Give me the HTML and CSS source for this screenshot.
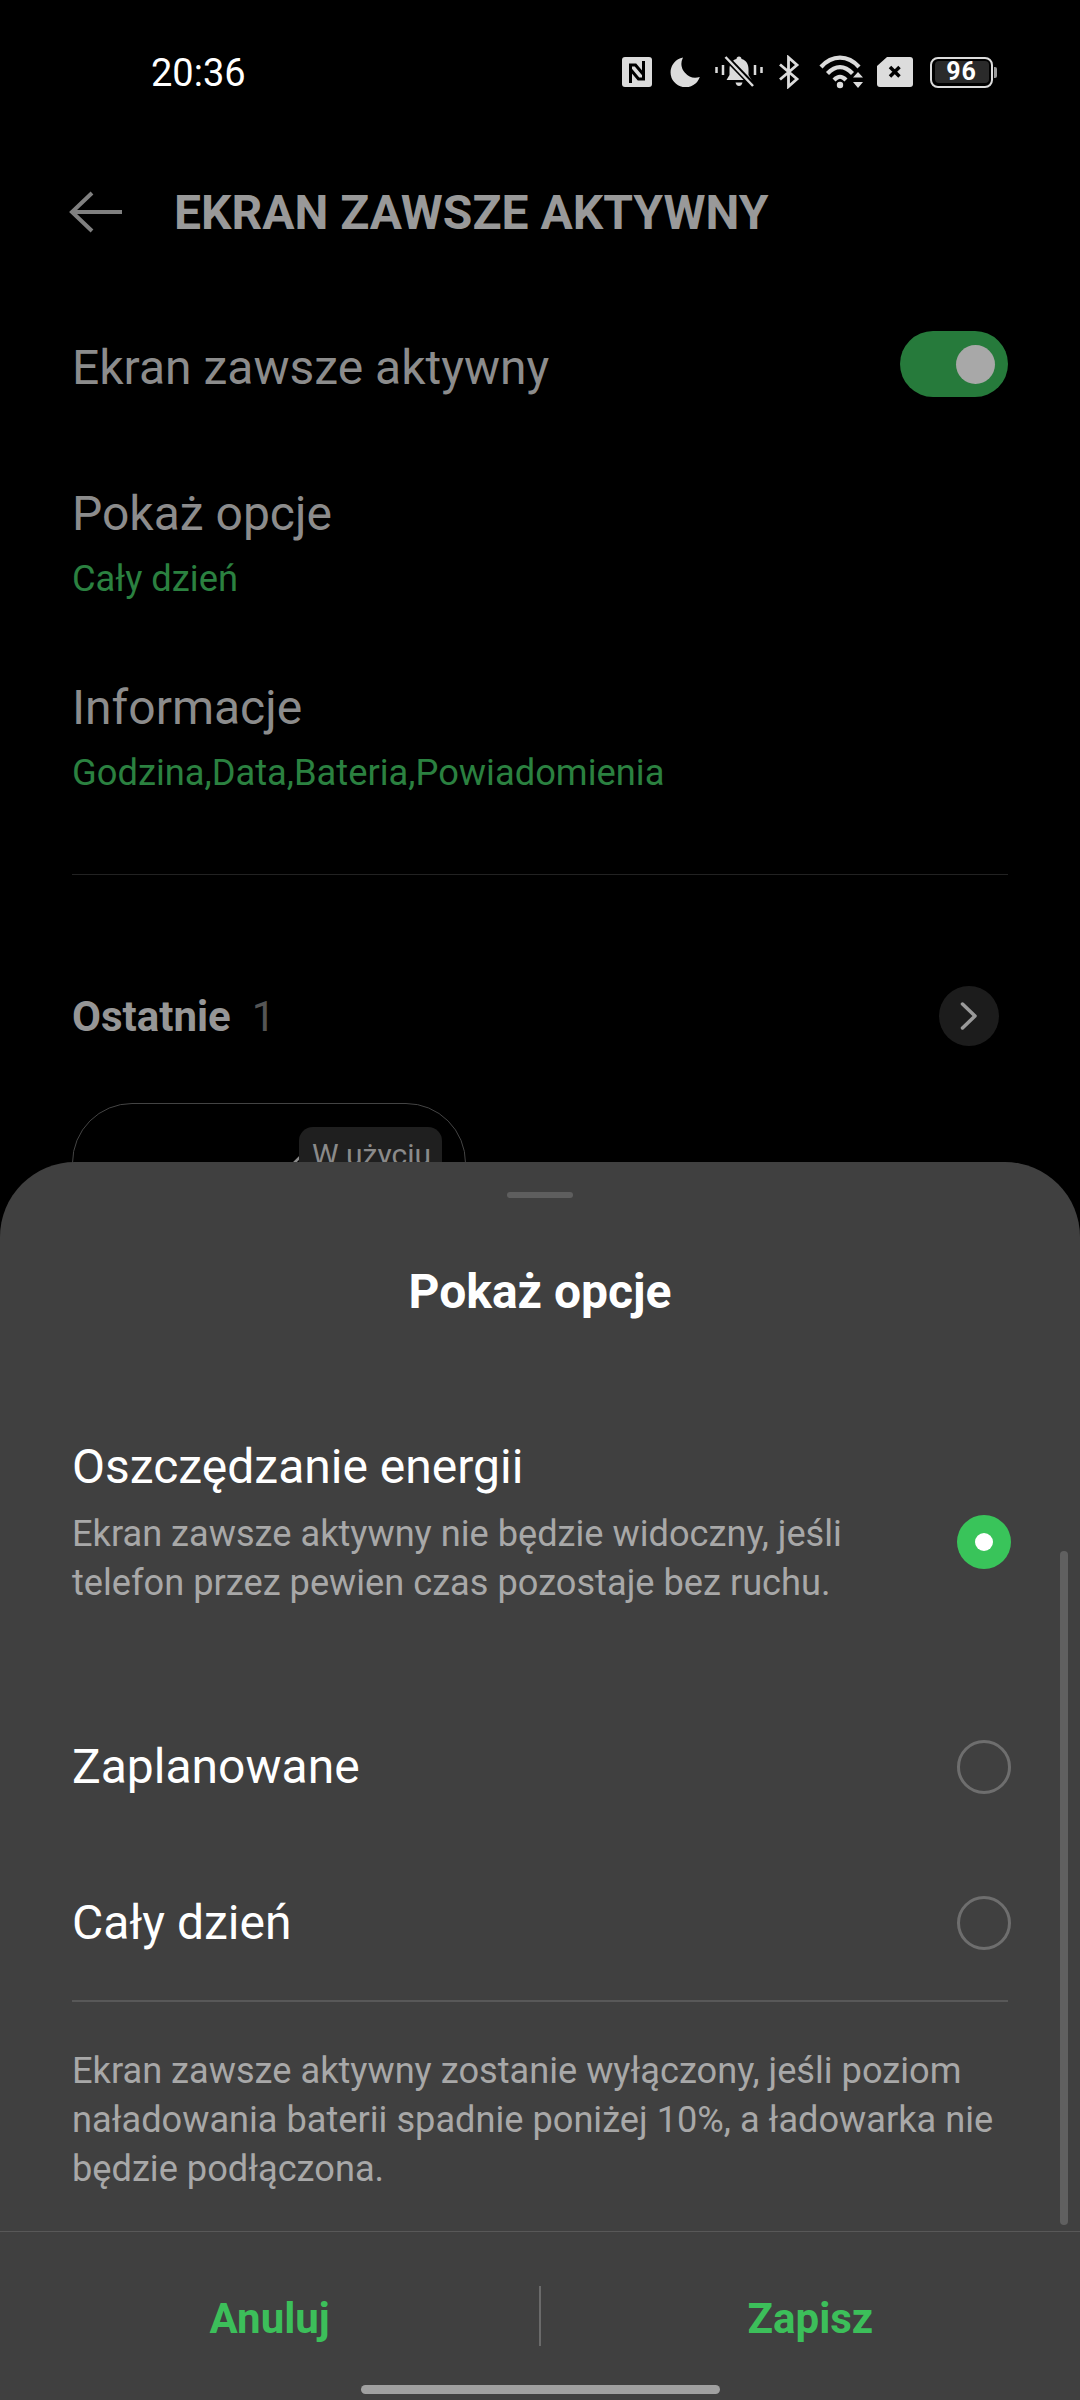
FILE: index.html
```html
<!DOCTYPE html>
<html lang="pl">
<head>
    <meta charset="UTF-8">
    <meta name="viewport" content="width=device-width, initial-scale=1.0">
    <title>Ekran zawsze aktywny</title>
    <link rel="stylesheet" href="styles.css">
</head>
<body>
    <div class="screen">
        <div class="status-bar">
            <span class="clock">20:36</span>
            <div class="status-icons">
                <svg class="ic-nfc" width="30" height="30" viewBox="0 0 30 30"><rect width="30" height="30" rx="3" fill="#dcdcdc"/><path d="M8.500 26V8h5l7.500 9M21.500 4v18h-5L9 13" fill="none" stroke="#000" stroke-width="3"/></svg>
                <svg class="ic-moon" width="30" height="30" viewBox="0 0 30 30"><path d="M13 0.500A15 15 0 1 0 29.800 20 14 14 0 0 1 13 0.500Z" fill="#dcdcdc"/></svg>
                <svg class="ic-bell" width="48" height="34" viewBox="0 0 48 34"><path d="M24 1.500c1.500 0 2.500 1 2.500 2.500 5 1.200 7 5.500 7 10v6l3 5H11.500l3-5v-6c0-4.500 2-8.800 7-10 0-1.500 1-2.500 2.500-2.500ZM20.500 27.500h7c-.5 2.500-2 3.500-3.500 3.500s-3-1-3.500-3.500Z" fill="#dcdcdc"/><path d="M12 3.500 39 31.500" stroke="#000" stroke-width="6"/><path d="M10.500 2 38 31" stroke="#dcdcdc" stroke-width="2.500"/><path d="M1.500 12v6M8 10v10M40 10v10M46.500 12v6" stroke="#dcdcdc" stroke-width="2.500"/></svg>
                <svg class="ic-bt" width="22" height="34" viewBox="0 0 22 34"><path d="M2 9.500 19 24 10.500 31.500V2.500L19 10 2 24.500" fill="none" stroke="#dcdcdc" stroke-width="2.800"/></svg>
                <svg class="ic-wifi" width="45" height="34" viewBox="0 0 45 34"><path d="M2 12C13-.5 29-.5 40 12M8.500 18.500c8-8.500 17-8.500 25 0M15 25c4.500-4.500 7.500-4.500 12 0" fill="none" stroke="#dcdcdc" stroke-width="4.200"/><circle cx="21" cy="30" r="3.200" fill="#dcdcdc"/><path d="M34 22.500 39 17l5 5.500ZM34 27 39 33l5-6Z" fill="#dcdcdc"/></svg>
                <svg class="ic-sim" width="36" height="30" viewBox="0 0 36 30"><path d="M10 0h23a3 3 0 0 1 3 3v24a3 3 0 0 1-3 3H3a3 3 0 0 1-3-3V9Z" fill="#dcdcdc"/><path d="M13 10l9.500 9.500M22.500 10 13 19.500" stroke="#000" stroke-width="3.500"/></svg>
                <div class="battery"><div class="battery-body"><span class="battery-level">96</span></div><div class="battery-nub"></div></div>
            </div>
        </div>

        <div class="top-bar">
            <svg class="back" width="54" height="44" viewBox="0 0 54 44"><path d="M53 22H3M23 3 3 22l20 19" fill="none" stroke="#808080" stroke-width="4"/></svg>
            <h1 class="page-title">EKRAN ZAWSZE AKTYWNY</h1>
        </div>

        <div class="settings">
            <div class="setting-row">
                <span class="setting-name">Ekran zawsze aktywny</span>
                <div class="switch"><div class="knob"></div></div>
            </div>
            <div class="setting-block first">
                <div class="setting-name">Pokaż opcje</div>
                <div class="setting-value">Cały dzień</div>
            </div>
            <div class="setting-block">
                <div class="setting-name">Informacje</div>
                <div class="setting-value">Godzina,Data,Bateria,Powiadomienia</div>
            </div>
            <div class="rule"></div>
            <div class="recent-head">
                <span class="recent-title">Ostatnie</span>
                <span class="recent-count">1</span>
                <div class="more"><svg width="18" height="28" viewBox="0 0 18 28"><path d="M2.500 2 15 14 2.500 26" fill="none" stroke="#9a9a9a" stroke-width="3.500" stroke-linecap="round" stroke-linejoin="round"/></svg></div>
            </div>
            <div class="recent-card">
                <svg class="check-tip" width="12" height="10" viewBox="0 0 12 10"><path d="M1 9 9 1" fill="none" stroke="#8a8a8a" stroke-width="2.500"/></svg>
                <span class="in-use">W użyciu</span>
            </div>
        </div>

        <div class="sheet">
            <div class="handle"></div>
            <h2 class="sheet-title">Pokaż opcje</h2>
            <div class="options">
                <div class="option option-long">
                    <div class="option-text">
                        <div class="option-name">Oszczędzanie energii</div>
                        <div class="option-desc">Ekran zawsze aktywny nie będzie widoczny, jeśli telefon przez pewien czas pozostaje bez ruchu.</div>
                    </div>
                    <div class="radio checked"></div>
                </div>
                <div class="option option-plan">
                    <div class="option-name">Zaplanowane</div>
                    <div class="radio"></div>
                </div>
                <div class="option option-all">
                    <div class="option-name">Cały dzień</div>
                    <div class="radio"></div>
                </div>
            </div>
            <div class="sheet-rule"></div>
            <p class="note">Ekran zawsze aktywny zostanie wyłączony, jeśli poziom naładowania baterii spadnie poniżej 10%, a ładowarka nie będzie podłączona.</p>
            <div class="scrollbar"></div>
            <div class="actions">
                <span class="action">Anuluj</span>
                <div class="action-sep"></div>
                <span class="action">Zapisz</span>
            </div>
            <div class="home-bar"></div>
        </div>
    </div>
</body>
</html>
```

FILE: styles.css
```css
* { box-sizing: border-box; }
html, body { margin: 0; padding: 0; background: #000; }
body { font-family: Roboto, "Noto Sans", sans-serif; }
h1, h2, p { margin: 0; font-weight: inherit; }

.screen { position: relative; width: 1080px; height: 2400px; overflow: hidden; background: #000; }

.status-bar { display: flex; align-items: center; justify-content: space-between; height: 34px; margin-top: 55px; padding: 0 83px 0 151px; }
.clock { padding-top: 2px; font-size: 38px; color: #fff; line-height: 34px; }
.status-icons { display: flex; align-items: center; }
.status-icons svg { display: block; flex: none; }
.ic-moon { margin-left: 18px; }
.ic-bell { margin-left: 15px; }
.ic-bt { margin-left: 15px; }
.ic-wifi { margin-left: 19px; }
.ic-sim { margin-left: 13px; }
.battery { display: flex; align-items: center; margin-left: 17px; }
.battery-body { width: 63px; height: 31px; border: 2.500px solid #dcdcdc; border-radius: 8px; padding: 2.500px; display: flex; }
.battery-level { flex: 1; background: #2a2a2a; border-radius: 4px; color: #fff; font-size: 25px; font-weight: 700; line-height: 21px; text-align: center; letter-spacing: 1px; }
.battery-nub { width: 3px; height: 11px; margin-left: 1px; background: #9a9a9a; border-radius: 0 2px 2px 0; }

.top-bar { display: flex; align-items: center; height: 60px; margin-top: 93px; padding-left: 69px; }
.back { display: block; flex: none; }
.page-title { margin-left: 51px; font-size: 48px; font-weight: 700; color: #999; white-space: nowrap; }

.settings { padding: 0 72px; }
.setting-row { display: flex; align-items: center; justify-content: space-between; margin-top: 89px; height: 66px; }
.setting-name { font-size: 48px; line-height: 54px; color: #8c8c8c; }
.setting-row .setting-name { padding-top: 7px; }
.switch { display: flex; align-items: center; justify-content: flex-end; width: 108px; height: 66px; padding-right: 13px; border-radius: 33px; background: #267a3b; }
.knob { width: 39px; height: 39px; border-radius: 50%; background: #a8a8a8; }
.setting-block { margin-top: 82px; }
.setting-block.first { margin-top: 90px; }
.setting-value { margin-top: 18px; font-size: 36.300px; line-height: 40px; color: #2b8140; }
.rule { height: 1px; margin-top: 81px; background: #222; }
.recent-head { display: flex; align-items: center; height: 60px; margin-top: 111px; }
.recent-title { font-size: 42px; font-weight: 700; color: #969696; }
.recent-count { margin-left: 21px; font-size: 42px; color: #555; }
.more { display: flex; align-items: center; justify-content: center; width: 60px; height: 60px; margin-left: auto; margin-right: 9px; border-radius: 50%; background: #1c1c1c; }
.recent-card { position: relative; width: 394px; height: 200px; margin-top: 57px; border: 1.500px solid #444; border-radius: 60px; }
.check-tip { position: absolute; top: 50px; left: 220px; }
.in-use { position: absolute; top: 23px; right: 23px; width: 143px; height: 70px; padding: 8px 0 0 13px; border-radius: 14px; background: #1f1f1f; font-size: 30px; line-height: 40px; color: #8a8a8a; white-space: nowrap; }

.sheet { position: absolute; left: 0; right: 0; top: 1162px; bottom: 0; border-radius: 75px 75px 0 0; background: #404040; }
.handle { width: 66px; height: 6px; margin: 30px auto 0; border-radius: 3px; background: #5e5e5e; }
.sheet-title { margin-top: 64px; font-size: 48px; font-weight: 700; line-height: 60px; text-align: center; color: #fff; }
.options { padding: 0 72px; margin-top: 117px; }
.option { display: flex; align-items: center; justify-content: space-between; }
.option-name { font-size: 48px; line-height: 56px; color: #fff; white-space: nowrap; }
.option-desc { margin-top: 14px; font-size: 36.200px; line-height: 49px; color: #a8a8a8; }
.option-long .option-text { width: 800px; }
.option-long .radio { margin-top: 38px; }
.option-plan { margin-top: 132px; }
.option-all { margin-top: 100px; }
.radio { flex: none; width: 54px; height: 54px; margin-right: -3px; border: 3px solid #6e6e6e; border-radius: 50%; }
.radio.checked { display: flex; align-items: center; justify-content: center; border: 0; background: #39c45a; }
.radio.checked::after { content: ""; width: 18px; height: 18px; border-radius: 50%; background: #fff; }
.sheet-rule { height: 1.500px; margin: 49px 72px 0; background: #585858; }
.note { margin-top: 44px; padding: 0 72px; font-size: 36.200px; line-height: 49px; color: #a8a8a8; }
.scrollbar { position: absolute; left: 1060px; top: 389px; width: 8px; height: 674px; border-radius: 4px; background: #606060; }

.actions { position: absolute; left: 0; right: 0; bottom: 0; height: 169px; display: flex; align-items: center; border-top: 1.500px solid #585858; padding-top: 4px; }
.action { flex: 1; text-align: center; font-size: 42px; font-weight: 700; color: #3cbf5a; }
.action-sep { width: 1.500px; height: 60px; margin-top: -4px; background: #6a6a6a; }
.home-bar { position: absolute; left: 361px; bottom: 6px; width: 359px; height: 9px; border-radius: 5px; background: #a0a0a0; }
```
